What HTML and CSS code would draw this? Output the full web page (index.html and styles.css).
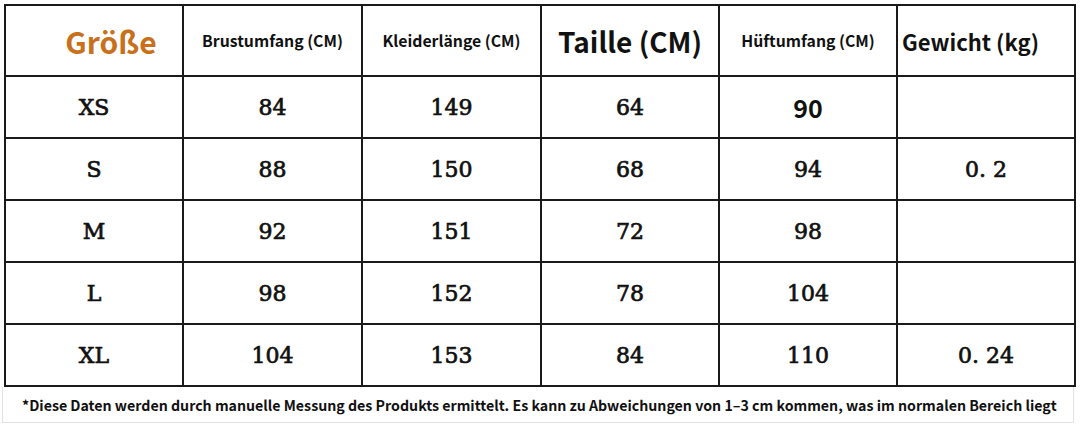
FILE: index.html
```html
<!DOCTYPE html>
<html lang="de">
<head>
<meta charset="utf-8">
<link rel="stylesheet" href="styles.css">
</head>
<body>
<div class="page">
  <table class="sizes">
    <colgroup>
      <col class="c1"><col class="c2"><col class="c3"><col class="c4"><col class="c5"><col class="c6">
    </colgroup>
    <thead>
      <tr>
        <th class="h-size">Größe</th>
        <th class="h-small">Brustumfang (CM)</th>
        <th class="h-small">Kleiderlänge (CM)</th>
        <th class="h-big">Taille (CM)</th>
        <th class="h-small">Hüftumfang (CM)</th>
        <th class="h-weight">Gewicht (kg)</th>
      </tr>
    </thead>
    <tbody>
      <tr><td>XS</td><td>84</td><td>149</td><td>64</td><td class="sans">90</td><td></td></tr>
      <tr><td>S</td><td>88</td><td>150</td><td>68</td><td>94</td><td>0. 2</td></tr>
      <tr><td>M</td><td>92</td><td>151</td><td>72</td><td>98</td><td></td></tr>
      <tr><td>L</td><td>98</td><td>152</td><td>78</td><td>104</td><td></td></tr>
      <tr><td>XL</td><td>104</td><td>153</td><td>84</td><td>110</td><td>0. 24</td></tr>
    </tbody>
  </table>
  <p class="note">*Diese Daten werden durch manuelle Messung des Produkts ermittelt. Es kann zu Abweichungen von 1–3 cm kommen, was im normalen Bereich liegt</p>
</div>
</body>
</html>
```
FILE: styles.css
```css
html, body {
  margin: 0;
  padding: 0;
  background: #ffffff;
}
.page {
  width: 1080px;
  height: 426px;
  box-sizing: border-box;
  padding: 4px 6px 0 4px;
  display: flex;
  flex-direction: column;
}
.sizes {
  border-collapse: collapse;
  table-layout: fixed;
  width: 1070px;
  color: #111;
}
.c1 { width: 178px; }
.c2 { width: 179px; }
.c3 { width: 179px; }
.c4 { width: 178px; }
.c5 { width: 178px; }
.c6 { width: 178px; }
.sizes th, .sizes td {
  border: 2px solid #1a1a1a;
  text-align: center;
  padding: 0;
}
.sizes th {
  height: 69px;
  font-family: "Noto Sans CJK SC", "Noto Sans", sans-serif;
  font-weight: 700;
  color: #111;
}
.sizes td {
  height: 60px;
  font-family: "DejaVu Serif", serif;
  font-size: 22px;
  font-weight: 400;
  -webkit-text-stroke: 0.7px #111;
}
.sizes td.sans {
  font-family: "Noto Sans CJK SC", "Noto Sans", sans-serif;
  font-size: 25px;
  font-weight: 700;
  -webkit-text-stroke: 0;
}
.h-size {
  color: #c8701c !important;
  font-size: 30px;
  padding-left: 34px !important;
}
.h-small {
  font-size: 15.8px;
}
.h-big {
  font-size: 28px;
}
.h-weight {
  font-size: 22px;
  text-align: left !important;
  padding-left: 4px !important;
}
.note {
  margin: 0;
  flex: 1;
  border: 1px solid #e2e2e2;
  border-top: none;
  margin-left: -2px;
  margin-bottom: 3px;
  display: flex;
  align-items: center;
  padding-left: 19px;
  font-family: "Noto Sans CJK SC", "Noto Sans", sans-serif;
  font-weight: 700;
  font-size: 14.2px;
  color: #111;
}
```
